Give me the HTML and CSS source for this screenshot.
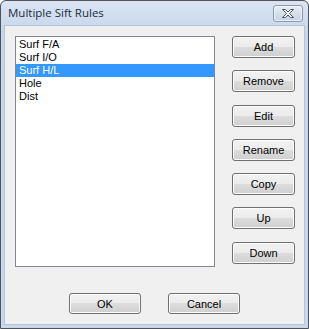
FILE: index.html
```html
<!DOCTYPE html>
<html lang="en">
<head>
    <meta charset="UTF-8">
    <title>Multiple Sift Rules</title>
    <link rel="stylesheet" href="styles.css">
</head>
<body>
    <div class="window">
        <div class="titlebar">
            <span class="title">Multiple Sift Rules</span>
            <button class="close-btn" aria-label="Close">
                <svg width="14" height="11" viewBox="0 0 14 11">
                    <path d="M1.5 1.5 L4.5 1.5 L7 4 L9.5 1.5 L12.5 1.5 L8.5 5.5 L12.5 9.5 L9.5 9.5 L7 7 L4.5 9.5 L1.5 9.5 L5.5 5.5 Z" fill="#f4f6f9" stroke="#4a5564" stroke-width="1" stroke-linejoin="round"/>
                </svg>
            </button>
        </div>
        <div class="client">
            <div class="main">
                <ul class="listbox">
                    <li>Surf F/A</li>
                    <li>Surf I/O</li>
                    <li class="selected">Surf H/L</li>
                    <li>Hole</li>
                    <li>Dist</li>
                </ul>
                <div class="side-buttons">
                    <button class="btn">Add</button>
                    <button class="btn">Remove</button>
                    <button class="btn">Edit</button>
                    <button class="btn">Rename</button>
                    <button class="btn">Copy</button>
                    <button class="btn">Up</button>
                    <button class="btn">Down</button>
                </div>
            </div>
            <div class="footer">
                <button class="btn btn-wide">OK</button>
                <button class="btn btn-wide">Cancel</button>
            </div>
        </div>
    </div>
</body>
</html>
```

FILE: styles.css
```css
/* dialog window */
body {
    margin: 0;
    background-color: #ffffff;
    font-family: 'Liberation Sans', Arial, sans-serif;
}
.window {
    width: 309px;
    height: 329px;
    box-sizing: border-box;
    border: 1px solid #505458;
    border-radius: 6px 6px 0 0;
    background: linear-gradient(#dae5f3, #c6d6eb 30px, #c9d8ec);
    padding: 0 3px 3px 3px;
    display: flex;
    flex-direction: column;
}
.titlebar {
    height: 24px;
    display: flex;
    align-items: flex-start;
    justify-content: space-between;
}
.title {
    font-family: 'Open Sans', 'Noto Sans', sans-serif;
    font-size: 11.5px;
    color: #1e2b3a;
    margin-top: 4px;
    margin-left: 4px;
}
.close-btn {
    width: 30px;
    height: 17px;
    margin-top: 4px;
    margin-right: 2px;
    padding: 0;
    border: 1px solid #8e9aab;
    border-radius: 3px;
    background: linear-gradient(#e9eff7, #d4dfec 50%, #c5d3e5);
    box-shadow: inset 0 0 0 1px rgba(255,255,255,0.6);
    display: flex;
    align-items: center;
    justify-content: center;
}
.client {
    flex: 1;
    background-color: #f0f0f0;
    border: 1px solid #b5c4d8;
    padding: 10px 0 0 10px;
}
.main {
    display: flex;
    align-items: flex-start;
}
.listbox {
    list-style: none;
    margin: 0;
    width: 200px;
    height: 231px;
    box-sizing: border-box;
    padding: 1px 0 0 0;
    border: 1px solid #828790;
    background-color: #ffffff;
}
.listbox li {
    height: 13px;
    line-height: 13px;
    font-size: 11px;
    padding-left: 3px;
    color: #000000;
}
.listbox li.selected {
    background-color: #3399ff;
    color: #ffffff;
}
.side-buttons {
    margin-left: 17px;
    display: flex;
    flex-direction: column;
    gap: 12.3px;
}
.btn {
    width: 63px;
    height: 22px;
    padding: 0;
    font-family: 'Liberation Sans', Arial, sans-serif;
    font-size: 11px;
    color: #000000;
    border: 1px solid #707070;
    border-radius: 3px;
    background: linear-gradient(#f2f2f2, #ebebeb 50%, #dddddd 50%, #cfcfcf);
    box-shadow: inset 0 0 0 1px #fcfcfc;
}
.footer {
    display: flex;
    justify-content: center;
    gap: 27px;
    padding-top: 26px;
    margin-left: -10px;
}
.btn-wide {
    width: 72px;
    height: 21px;
}
```
